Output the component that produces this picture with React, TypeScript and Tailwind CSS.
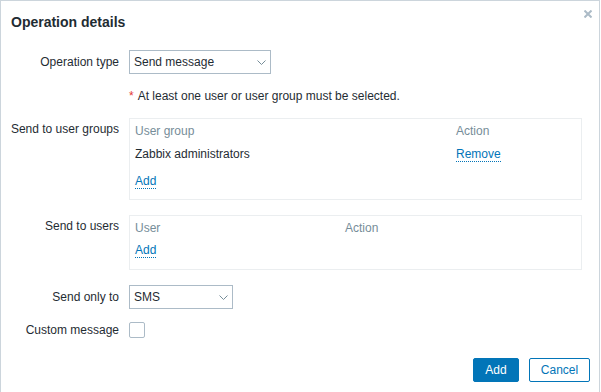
import React from 'react'

// Operation details dialog (Zabbix style)

const text = 'text-[#1f2c33]'

function Chevron() {
  return (
    <svg width="9" height="5" viewBox="0 0 9 5" className="shrink-0">
      <path d="M0.5 0.5 L4.5 4.5 L8.5 0.5" fill="none" stroke="#768d99" strokeWidth="1" />
    </svg>
  )
}

function Select({ value, width }: { value: string; width: string }) {
  return (
    <div className={`${width} h-[24px] border border-[#acbbc7] bg-white flex items-center justify-between pl-[4px] pr-[4px]`}>
      <span className={text}>{value}</span>
      <Chevron />
    </div>
  )
}

function Link({ children }: { children: React.ReactNode }) {
  return (
    <div className="flex">
      <span className="text-[#0275b8] border-b border-dotted border-[#0275b8] leading-[14px]">{children}</span>
    </div>
  )
}

function Label({ children, className = '' }: { children: React.ReactNode; className?: string }) {
  return <div className={`w-[128px] shrink-0 text-right pr-[10px] ${text} ${className}`}>{children}</div>
}

export default function App() {
  return (
    <div
      className="bg-white w-[600px] h-[420px] border border-[#ccd5dc] relative text-[12px] leading-[14px]"
      style={{ fontFamily: '"Liberation Sans", Arial, sans-serif' }}
    >
      {/* Header */}
      <div className="pt-[12px] pl-[10px]">
        <h4 className={`text-[14px] leading-[18px] font-bold ${text}`}>Operation details</h4>
      </div>
      <button className="absolute top-[8px] right-[6px] w-[10px] h-[10px] flex items-center justify-center">
        <svg width="8" height="8" viewBox="0 0 8 8">
          <path d="M0.5 0.5 L7.5 7.5 M7.5 0.5 L0.5 7.5" stroke="#acbbc7" strokeWidth="2" />
        </svg>
      </button>

      {/* Form */}
      <div className="flex flex-col">
        <div className="flex items-center mt-[19px]">
          <Label>Operation type</Label>
          <Select value="Send message" width="w-[142px]" />
        </div>

        <div className="flex mt-[15px]">
          <div className="w-[128px] shrink-0" />
          <div className={text}>
            <span className="text-[#e33734] mr-[4px]">*</span>
            At least one user or user group must be selected.
          </div>
        </div>

        <div className="flex items-start mt-[15px]">
          <Label className="mt-[4px]">Send to user groups</Label>
          <div className="w-[453px] border border-[#ebeef0] pt-[5px] pb-[10px] pl-[5px]">
            <div className="grid grid-cols-[321px_1fr]">
              <div className="text-[#768d99]">User group</div>
              <div className="text-[#768d99]">Action</div>
              <div className={`${text} mt-[9px]`}>Zabbix administrators</div>
              <div className="mt-[9px]">
                <Link>Remove</Link>
              </div>
            </div>
            <div className="mt-[12px]">
              <Link>Add</Link>
            </div>
          </div>
        </div>

        <div className="flex items-start mt-[15px]">
          <Label className="mt-[4px]">Send to users</Label>
          <div className="w-[453px] border border-[#ebeef0] pt-[5px] pb-[11px] pl-[5px]">
            <div className="grid grid-cols-[210px_1fr]">
              <div className="text-[#768d99]">User</div>
              <div className="text-[#768d99]">Action</div>
            </div>
            <div className="mt-[8px]">
              <Link>Add</Link>
            </div>
          </div>
        </div>

        <div className="flex items-center mt-[15px]">
          <Label>Send only to</Label>
          <Select value="SMS" width="w-[104px]" />
        </div>

        <div className="flex items-center mt-[13px]">
          <Label>Custom message</Label>
          <div className="w-[16px] h-[16px] border border-[#acbbc7] rounded-[2px] bg-white" />
        </div>

        {/* Footer */}
        <div className="flex justify-end gap-[10px] mt-[20px] pr-[9px]">
          <button className="h-[24px] w-[46px] bg-[#0275b8] border border-[#0275b8] rounded-[2px] text-white">
            Add
          </button>
          <button className="h-[24px] w-[61px] bg-white border border-[#0275b8] rounded-[2px] text-[#0275b8]">
            Cancel
          </button>
        </div>
      </div>
    </div>
  )
}
